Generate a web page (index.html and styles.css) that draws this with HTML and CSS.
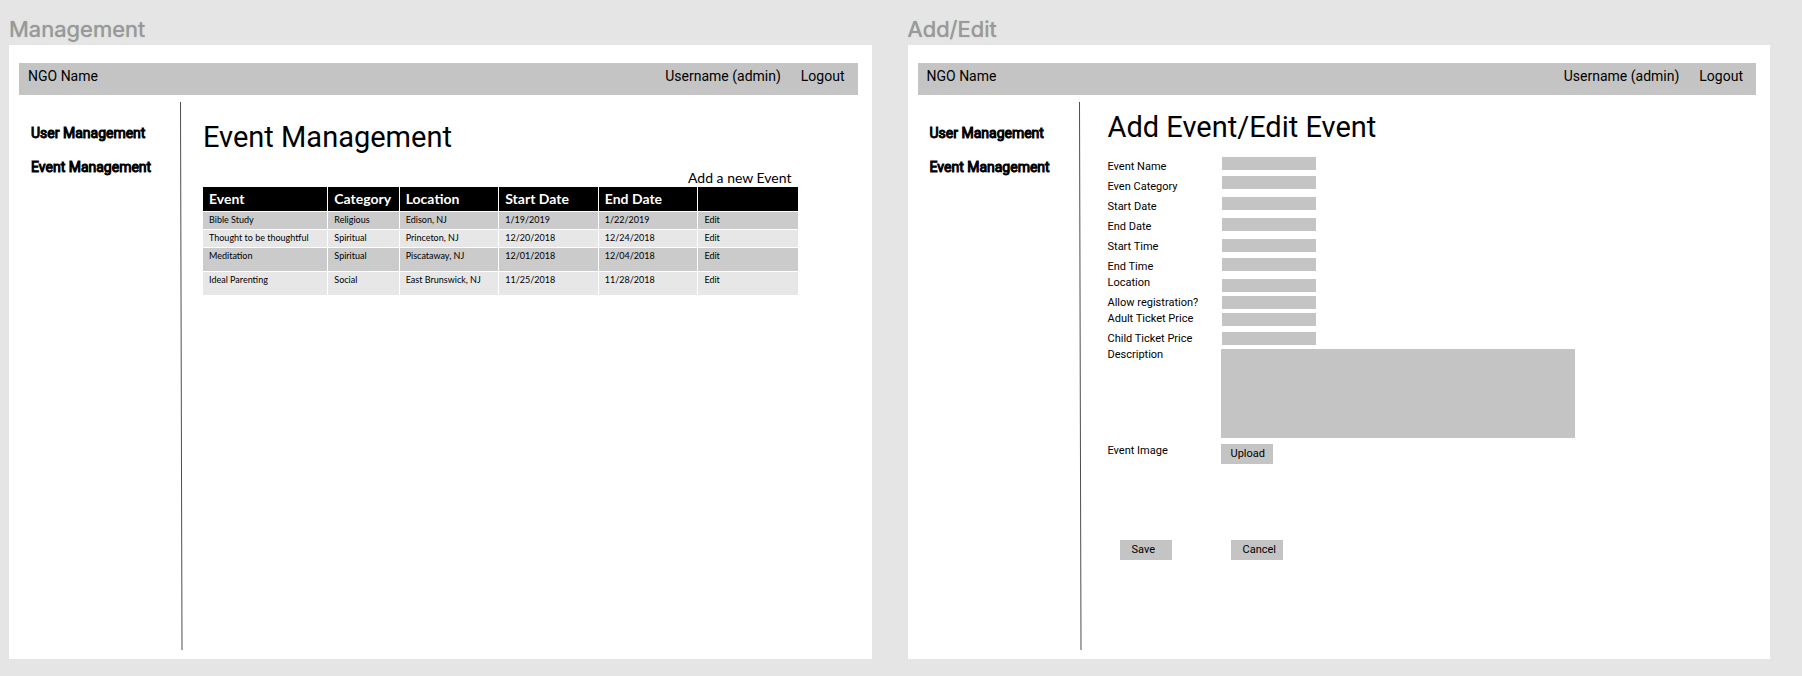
FILE: index.html
```html
<!DOCTYPE html>
<html lang="en">
<head>
<meta charset="utf-8">
<title>Event Management wireframes</title>
<link rel="stylesheet" href="styles.css">
</head>
<body>
<div class="board">
  <section class="artboard">
    <h2 class="artboard-name">Management</h2>
    <div class="screen">
      <header class="topbar">
        <span class="brand">NGO Name</span>
        <span>Username (admin)</span>
        <a href="#">Logout</a>
      </header>
      <div class="body">
        <nav class="sidebar">
          <a href="#">User Management</a>
          <a href="#">Event Management</a>
        </nav>
        <svg class="divider" viewBox="0 0 3 548" preserveAspectRatio="none" aria-hidden="true"><line x1="0.5" y1="0" x2="2" y2="548" stroke="#000" stroke-width="0.7"/></svg>
        <main class="content content-list">
          <h1>Event Management</h1>
          <a class="add-link" href="#">Add a new Event</a>
          <table class="events">
            <colgroup><col class="col-event"><col class="col-category"><col><col><col><col></colgroup>
            <thead>
              <tr><th>Event</th><th>Category</th><th>Location</th><th>Start Date</th><th>End Date</th><th></th></tr>
            </thead>
            <tbody>
              <tr><td>Bible Study</td><td>Religious</td><td>Edison, NJ</td><td>1/19/2019</td><td>1/22/2019</td><td><a href="#">Edit</a></td></tr>
              <tr><td>Thought to be thoughtful</td><td>Spiritual</td><td>Princeton, NJ</td><td>12/20/2018</td><td>12/24/2018</td><td><a href="#">Edit</a></td></tr>
              <tr class="tall"><td>Meditation</td><td>Spiritual</td><td>Piscataway, NJ</td><td>12/01/2018</td><td>12/04/2018</td><td><a href="#">Edit</a></td></tr>
              <tr class="tall"><td>Ideal Parenting</td><td>Social</td><td>East Brunswick, NJ</td><td>11/25/2018</td><td>11/28/2018</td><td><a href="#">Edit</a></td></tr>
            </tbody>
          </table>
        </main>
      </div>
    </div>
  </section>

  <section class="artboard">
    <h2 class="artboard-name">Add/Edit</h2>
    <div class="screen">
      <header class="topbar">
        <span class="brand">NGO Name</span>
        <span>Username (admin)</span>
        <a href="#">Logout</a>
      </header>
      <div class="body">
        <nav class="sidebar">
          <a href="#">User Management</a>
          <a href="#">Event Management</a>
        </nav>
        <svg class="divider" viewBox="0 0 3 548" preserveAspectRatio="none" aria-hidden="true"><line x1="0.5" y1="0" x2="2" y2="548" stroke="#000" stroke-width="0.7"/></svg>
        <main class="content content-form">
          <h1>Add Event/Edit Event</h1>
          <form>
            <div class="form-columns">
              <div class="labels">
                <label for="name">Event Name</label>
                <label for="category">Even Category</label>
                <label for="start-date">Start Date</label>
                <label for="end-date">End Date</label>
                <label for="start-time">Start Time</label>
                <label for="end-time">End Time</label>
                <label class="tight" for="location">Location</label>
                <label for="registration">Allow registration?</label>
                <label class="tight" for="adult">Adult Ticket Price</label>
                <label for="child">Child Ticket Price</label>
                <label class="tight label-description" for="description">Description</label>
                <label for="image">Event Image</label>
              </div>
              <div class="fields">
                <input type="text" id="name">
                <input type="text" id="category">
                <input class="loose" type="text" id="start-date">
                <input class="loose" type="text" id="end-date">
                <input class="loose" type="text" id="start-time">
                <input type="text" id="end-time">
                <input class="loose" type="text" id="location">
                <input class="tight" type="text" id="registration">
                <input class="tight" type="text" id="adult">
                <input type="text" id="child">
                <textarea class="tight" id="description"></textarea>
                <button type="button" id="image">Upload</button>
              </div>
            </div>
            <div class="actions">
              <button type="submit">Save</button>
              <button type="button">Cancel</button>
            </div>
          </form>
        </main>
      </div>
    </div>
  </section>
</div>
</body>
</html>
```
FILE: styles.css
```css
* {
  box-sizing: border-box;
}

body {
  margin: 0;
  background: #e5e5e5;
  color: #000;
  font-family: Roboto, "Liberation Sans", sans-serif;
  font-size: 14px;
}

a {
  color: inherit;
  text-decoration: none;
}

.board {
  display: grid;
  grid-template-columns: 1fr 1fr;
  gap: 36px;
  min-height: 100vh;
  padding: 13px 32px 18px 9px;
}

.artboard {
  display: flex;
  flex-direction: column;
  min-width: 0;
}

.artboard-name {
  margin: 0;
  color: #999;
  font-family: Inter, sans-serif;
  font-size: 22px;
  font-weight: 400;
  line-height: 32px;
  text-shadow: 0 0 1px #999;
}

.screen {
  display: flex;
  flex: 1;
  flex-direction: column;
  padding: 18px 14px 9px 10px;
  background: #fff;
}

.topbar {
  display: flex;
  gap: 20px;
  height: 32px;
  padding: 0 13px 0 9px;
  background: #c4c4c4;
  line-height: 26px;
}

.brand {
  flex: 1;
}

.body {
  display: grid;
  flex: 1;
  grid-template-columns: 161px 3px 1fr;
  padding-top: 7px;
}

.divider {
  width: 100%;
  height: 100%;
}

.sidebar {
  display: flex;
  flex-direction: column;
  gap: 16px;
  padding: 22px 0 0 12px;
  line-height: 18px;
  -webkit-text-stroke: 1px #000;
}

.content {
  min-width: 0;
}

.content-list {
  display: flex;
  flex-direction: column;
  padding: 17px 60px 0 20px;
}

.content-form {
  padding: 7px 0 0 26px;
}

h1 {
  margin: 0;
  font-size: 29px;
  font-weight: 400;
  line-height: 36px;
}

.add-link {
  align-self: flex-end;
  margin-top: 14px;
  padding-right: 6px;
  font-family: Lato, sans-serif;
  font-size: 14px;
  line-height: 18px;
}

.events {
  width: 100%;
  border-collapse: collapse;
  table-layout: fixed;
  font-family: Lato, sans-serif;
  font-size: 9px;
  line-height: 13px;
}

.col-event {
  width: 21%;
}

.col-category {
  width: 12%;
}

.events th {
  height: 24px;
  padding: 0 6px;
  border-right: 1px solid #fff;
  border-bottom: 1px solid #fff;
  background: #000;
  color: #fff;
  font-size: 14px;
  text-align: left;
}

.events td {
  height: 18px;
  padding: 1px 6px;
  border-right: 1px solid #fff;
  border-bottom: 1px solid #fff;
  background: #e7e7e7;
  vertical-align: top;
  white-space: nowrap;
}

.events th:last-child,
.events td:last-child {
  border-right: 0;
}

.events tbody tr:nth-child(odd) td {
  background: #cbcbcb;
}

.events .tall td {
  height: 24px;
}

.form-columns {
  display: grid;
  grid-template-columns: 113px minmax(0, 354px);
  padding-top: 12px;
  font-size: 11px;
}

.labels,
.fields {
  display: flex;
  flex-direction: column;
}

.labels {
  gap: 4px;
  padding-top: 2px;
  line-height: 16px;
}

.labels .tight {
  margin-top: -4px;
}

.labels .label-description {
  margin-bottom: 76px;
}

.fields {
  align-items: flex-start;
  gap: 6px;
}

.fields .loose {
  margin-top: 2px;
}

.fields .tight {
  margin-top: -2px;
}

.fields input {
  width: 94px;
  height: 13px;
  margin-left: 1px;
  padding: 0 4px;
  border: 0;
  background: #c4c4c4;
  font: inherit;
}

.fields textarea {
  width: 100%;
  height: 89px;
  padding: 4px;
  border: 0;
  background: #c4c4c4;
  font: inherit;
  resize: none;
}

button {
  width: 52px;
  height: 20px;
  padding: 0 0 0 10px;
  border: 0;
  background: #c4c4c4;
  color: #000;
  font-family: inherit;
  font-size: 11px;
  line-height: 20px;
  text-align: left;
}

.actions {
  display: flex;
  gap: 59px;
  padding: 76px 0 0 12px;
}

.actions button {
  padding-left: 12px;
}
```
